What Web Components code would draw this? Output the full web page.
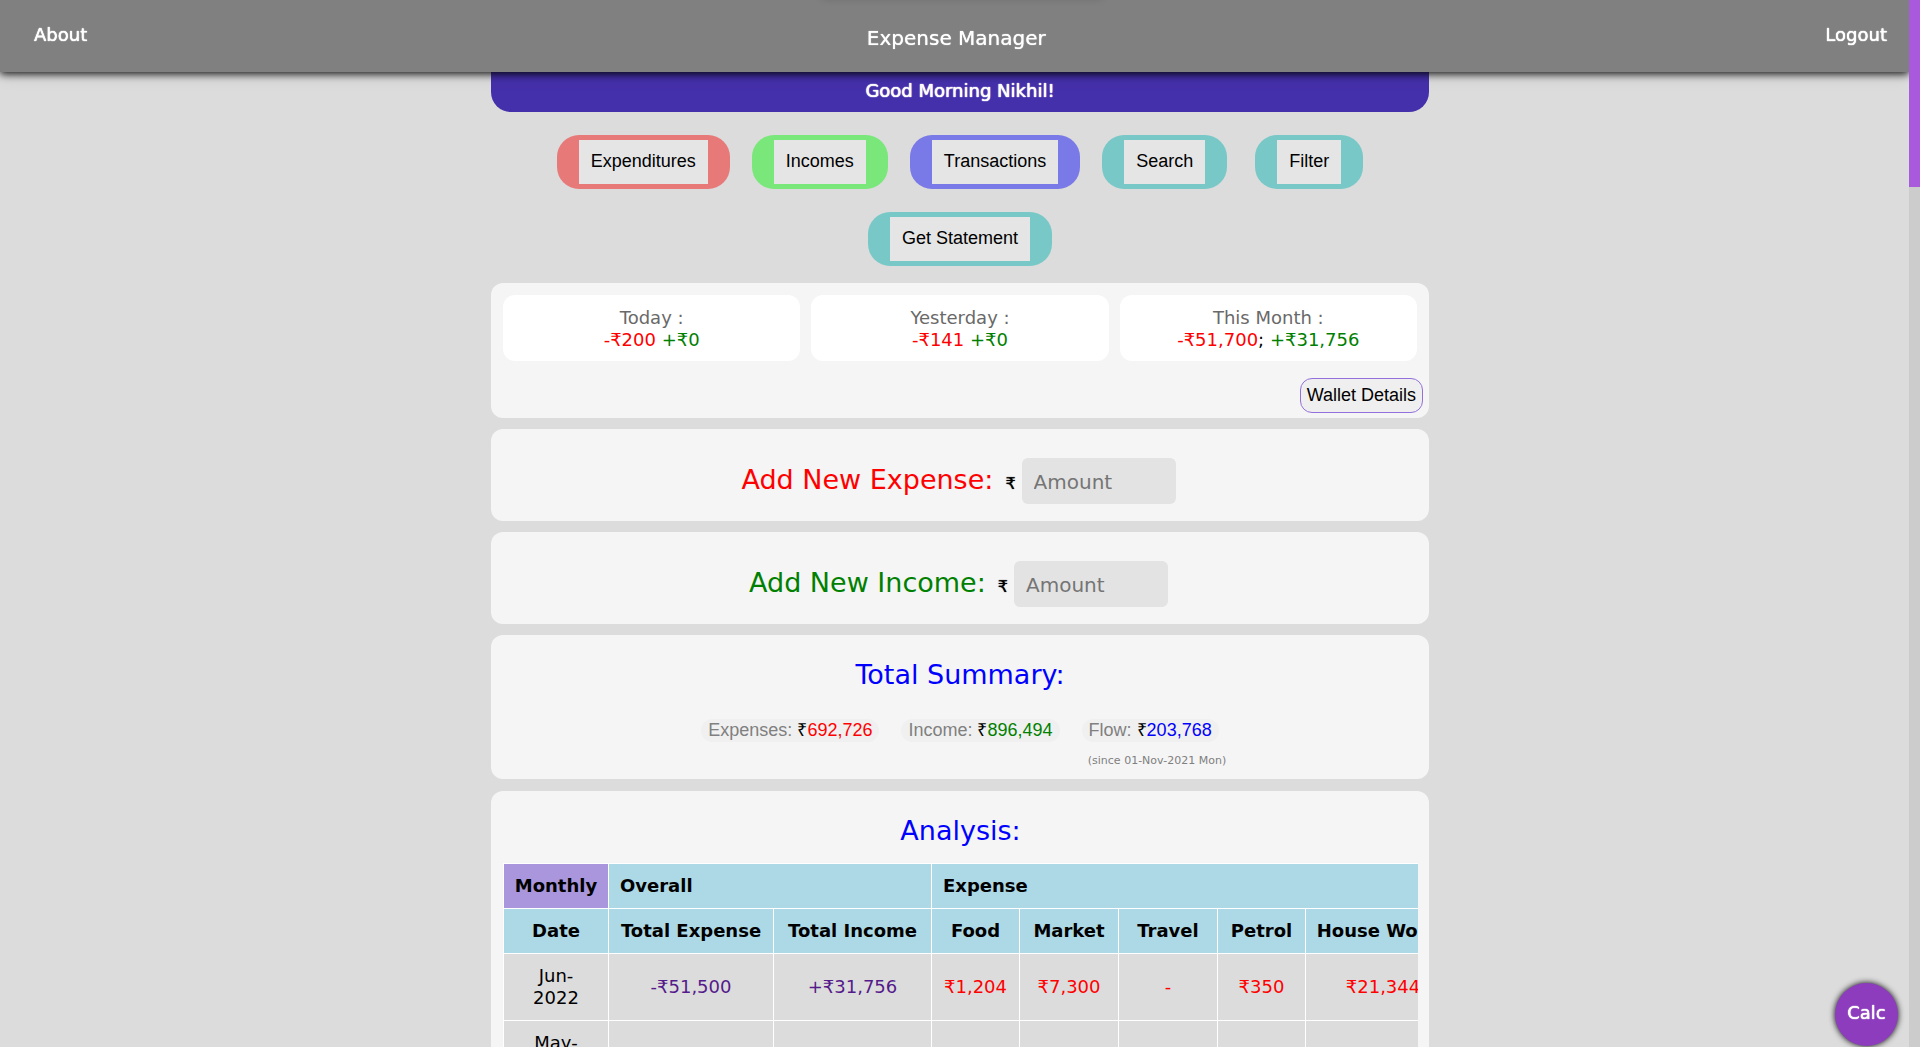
<!DOCTYPE html>
<html lang="en">
<head>
<meta charset="utf-8">
<title>Expense Manager</title>
<style>
  html, body { height: 100%; }
  body {
    margin: 0;
    overflow: hidden;
    background: gainsboro;
    color: black;
    font: 18px/22px "DejaVu Sans", Verdana, sans-serif;
  }
</style>
</head>
<body>
<expense-app></expense-app>

<script>
const define = (name, html, setup) => {
  const template = document.createElement('template');
  template.innerHTML = `<style>*{box-sizing:border-box}</style>${html}`;
  customElements.define(name, class extends HTMLElement {
    constructor() {
      super();
      this.attachShadow({ mode: 'open' }).append(template.content.cloneNode(true));
    }
    connectedCallback() { if (setup) setup(this, this.shadowRoot); }
  });
};

define('top-bar', `
  <style>
    :host {
      position: fixed; inset: 0 11px auto 0; z-index: 2;
      display: flex; justify-content: space-between; align-items: center;
      box-sizing: border-box; height: 72px; padding: 0 22px 0 34px;
      background: gray; color: white;
      box-shadow: 0 2px 8px rgba(0,0,0,.9), 0 4px 16px rgba(0,0,0,.1);
    }
    :host::before {
      content: ""; position: absolute; top: -12px; left: 50%; width: 280px; height: 10px;
      margin-left: -133px; box-shadow: 0 0 8px rgba(0,0,0,.2);
    }
    a { color: inherit; text-decoration: none; padding-bottom: 2px; text-shadow: 0 0 1px white, 0 0 1px white; }
    h1 { margin: 0; font-size: 20px; font-weight: 400; line-height: 24px; padding-top: 4px; text-shadow: 0 0 1px white; }
  </style>
  <a href="#about">About</a>
  <h1>Expense Manager</h1>
  <a href="#logout">Logout</a>
`);

define('scroll-rail', `
  <style>
    :host { position: fixed; inset: 0 0 0 auto; width: 11px; background: #ccc; z-index: 3; }
    div { height: 187px; background: #a959dc; }
  </style>
  <div></div>
`);

define('greeting-banner', `
  <style>
    :host {
      display: block; padding: 80px 0 10px; text-align: center; color: white;
      background: #4530ab; border-radius: 0 0 20px 20px; text-shadow: 0 0 1px white, 0 0 1px white;
    }
  </style>
  <slot></slot>
`);

define('nav-pill', `
  <style>
    :host { display: block; }
    button {
      display: block; border: 0; margin: 0; padding: 5px 22px; border-radius: 22px;
      background: var(--tone, #79c8c8); font: 18px/22px "Liberation Sans", Arial, sans-serif; color: black;
    }
    span { display: block; padding: 10px 12px 12px; background: #e5e5e5; }
  </style>
  <button type="button"><span><slot></slot></span></button>
`);

define('nav-pills', `
  <style>
    :host { display: flex; flex-direction: column; align-items: center; gap: 23px; padding: 23px 0 17px; }
    div { display: flex; flex-wrap: wrap; justify-content: center; gap: 22px; }
    .extra { padding-left: 6px; }
  </style>
  <div>
    <nav-pill style="--tone:#e77979">Expenditures</nav-pill>
    <nav-pill style="--tone:#79e779">Incomes</nav-pill>
    <nav-pill style="--tone:#7979e7">Transactions</nav-pill>
    <nav-pill>Search</nav-pill>
    <nav-pill class="extra">Filter</nav-pill>
  </div>
  <nav-pill>Get Statement</nav-pill>
`);

define('panel-card', `
  <style>
    :host { display: block; padding: 12px; margin-bottom: 11px; background: whitesmoke; border-radius: 12px; box-sizing: border-box; }
  </style>
  <slot></slot>
`);

define('period-tile', `
  <style>
    :host { flex: 1; display: block; padding: 12px 11px 10px; background: white; border-radius: 12px; text-align: center; }
    .label { color: dimgray; }
    .out { color: red; }
    .in { color: green; }
  </style>
  <div class="label"></div>
  <div><span class="out"></span><span class="sep"></span> <span class="in"></span></div>
`, (host, root) => {
  root.querySelector('.label').textContent = host.getAttribute('label') + ' :';
  root.querySelector('.out').textContent = host.getAttribute('out');
  root.querySelector('.sep').textContent = host.getAttribute('sep') || '';
  root.querySelector('.in').textContent = host.getAttribute('in');
});

define('period-panel', `
  <style>
    :host { display: block; }
    panel-card { padding-bottom: 5px; }
    .tiles { display: flex; gap: 11px; }
    .foot { display: flex; justify-content: flex-end; margin: 17px -6px 0 0; }
    button {
      padding: 5px 6px; border: 1px solid mediumpurple; border-radius: 12px; background: #efefef;
      font: 18px/23px "Liberation Sans", Arial, sans-serif; color: black;
    }
  </style>
  <panel-card>
    <div class="tiles">
      <period-tile label="Today" out="-₹200" in="+₹0"></period-tile>
      <period-tile label="Yesterday" out="-₹141" in="+₹0"></period-tile>
      <period-tile label="This Month" out="-₹51,700" sep=";" in="+₹31,756"></period-tile>
    </div>
    <div class="foot"><button type="button">Wallet Details</button></div>
  </panel-card>
`);

define('amount-form', `
  <style>
    :host { display: block; }
    panel-card { padding: 29px 12px 17px; }
    form { display: flex; justify-content: center; align-items: baseline; padding-right: 3px; }
    label { font-size: 27px; line-height: 32px; color: var(--tone); margin-right: 12px; }
    span { margin-right: 6px; font-size: 16px; text-shadow: 0 0 1px black; }
    input {
      width: 154px; height: 46px; padding: 1px 12px 0; border: 0; border-radius: 6px;
      background: #e3e3e3; font: 20px "DejaVu Sans", Verdana, sans-serif;
    }
    input::placeholder { color: #757575; }
  </style>
  <panel-card><form>
    <label for="amount"></label><span>₹</span><input id="amount" type="text" inputmode="numeric" placeholder="Amount">
  </form></panel-card>
`, (host, root) => { root.querySelector('label').textContent = host.getAttribute('label'); });

define('total-summary', `
  <style>
    :host { display: block; }
    panel-card { padding: 23px 12px 7px; }
    h2 { margin: 0; font-size: 27px; font-weight: 400; line-height: 34px; color: blue; text-align: center; }
    .pills { display: flex; justify-content: center; gap: 22px; margin-top: 27px; }
    button {
      border: 0; padding: 0 7px; border-radius: 12px; background: #f0f0f0;
      font: 18px/23px "Liberation Sans", Arial, sans-serif; color: black;
    }
    i { font-style: normal; color: gray; }
    b { font-weight: 400; }
    small { display: block; margin-top: 8px; padding-left: 394px; text-align: center; font-size: 11px; color: gray; }
  </style>
  <panel-card>
    <h2>Total Summary:</h2>
    <div class="pills">
      <button type="button"><i>Expenses:</i> ₹<b style="color:red">692,726</b></button>
      <button type="button"><i>Income:</i> ₹<b style="color:green">896,494</b></button>
      <button type="button"><i>Flow:</i> ₹<b style="color:blue">203,768</b></button>
    </div>
    <small>(since 01-Nov-2021 Mon)</small>
  </panel-card>
`);

define('analysis-panel', `
  <style>
    :host { display: block; }
    h2 { margin: 0; font-size: 27px; font-weight: 400; line-height: 34px; color: blue; text-align: center; }
    panel-card { padding: 23px 11px 12px 12px; margin-top: 12px; }
    .scroll { overflow: hidden; margin-top: 15px; }
    table { width: 958px; table-layout: fixed; border-collapse: collapse; text-align: center; }
    th, td { border: 1px solid white; padding: 11px 0; white-space: nowrap; }
    th { background: lightblue; }
    .group th { text-align: left; padding-left: 11px; }
    .group th.mode { background: #a996dc; padding-left: 0; text-align: center; }
    tbody th, td { background: gainsboro; font-weight: 400; height: 67px; }
    td { color: red; }
    td.total { color: #551a8b; }
  </style>
  <panel-card>
    <h2>Analysis:</h2>
    <div class="scroll">
      <table>
        <colgroup><col style="width:105px"><col style="width:165px"><col style="width:158px"><col style="width:88px"><col style="width:99px"><col style="width:99px"><col style="width:88px"><col></colgroup>
        <thead>
          <tr class="group"><th class="mode">Monthly</th><th colspan="2">Overall</th><th colspan="5">Expense</th></tr>
          <tr><th>Date</th><th>Total Expense</th><th>Total Income</th><th>Food</th><th>Market</th><th>Travel</th><th>Petrol</th><th>House Works</th></tr>
        </thead>
        <tbody>
          <tr><th>Jun-<br>2022</th><td class="total">-₹51,500</td><td class="total">+₹31,756</td><td>₹1,204</td><td>₹7,300</td><td>-</td><td>₹350</td><td>₹21,344</td></tr>
          <tr><th>May-<br>2022</th><td class="total"></td><td class="total"></td><td></td><td></td><td></td><td></td><td></td></tr>
        </tbody>
      </table>
    </div>
  </panel-card>
`);

define('calc-button', `
  <style>
    :host { position: fixed; right: 22px; bottom: 1px; z-index: 2; display: block; }
    button {
      width: 63px; height: 63px; padding: 0 0 4px; border: 0; border-radius: 50%;
      background: #8c3cbd; color: white; font: 18px "DejaVu Sans", Verdana, sans-serif;
      box-shadow: 0 0 6px black; text-shadow: 0 0 1px white, 0 0 1px white;
    }
  </style>
  <button type="button">Calc</button>
`);

define('expense-app', `
  <style>
    :host { display: block; height: 100vh; overflow: hidden; }
    main { max-width: 938px; margin: 0 auto; }
  </style>
  <top-bar></top-bar>
  <main>
    <greeting-banner>Good Morning Nikhil!</greeting-banner>
    <nav-pills></nav-pills>
    <period-panel></period-panel>
    <amount-form label="Add New Expense:" style="--tone:red"></amount-form>
    <amount-form label="Add New Income:" style="--tone:green"></amount-form>
    <total-summary></total-summary>
    <analysis-panel></analysis-panel>
  </main>
  <calc-button></calc-button>
  <scroll-rail></scroll-rail>
`);
</script>
</body>
</html>
